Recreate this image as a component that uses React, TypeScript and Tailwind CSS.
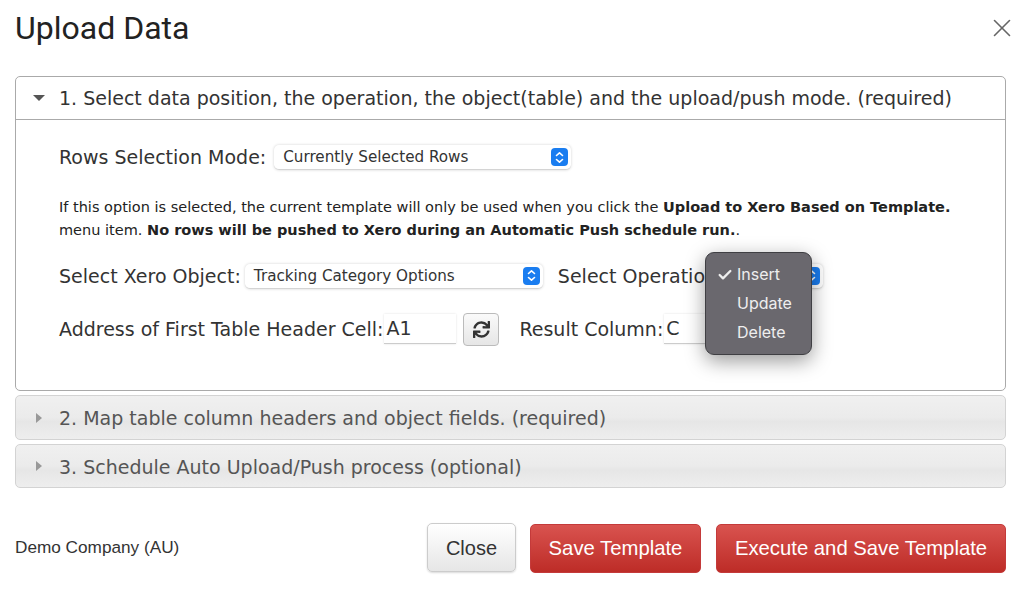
import React from 'react';
import { X, Check } from 'lucide-react';
import { FaSync } from 'react-icons/fa';

const verdana = "font-['DejaVu_Sans',sans-serif]";

function Stepper() {
  return (
    <span className="flex h-[18px] w-[17px] shrink-0 items-center justify-center rounded-[4px] bg-[#1a7df0]">
      <svg width="9" height="13" viewBox="0 0 9 13" fill="none" stroke="white" strokeWidth="1.6" strokeLinecap="round" strokeLinejoin="round">
        <path d="M1.5 4.5 4.5 1.8 7.5 4.5" />
        <path d="M1.5 8.5 4.5 11.2 7.5 8.5" />
      </svg>
    </span>
  );
}

function MacSelect({ label, className }: { label: string; className: string }) {
  return (
    <div className={`flex h-[25px] items-center justify-between rounded-[5px] border-b border-[#d4d4d4] bg-white pl-[9px] pr-[3px] text-[15.2px] text-[#333] shadow-[0_0_3px_rgba(0,0,0,0.18)] ${className}`}>
      <span className="pt-[1px]">{label}</span>
      <Stepper />
    </div>
  );
}

function CollapsedRow({ title, className }: { title: string; className: string }) {
  return (
    <div className={`flex items-center rounded-[5px] border border-[#d3d3d3] bg-[linear-gradient(#f0f0f0,#ebebeb_50%,#e6e6e6_60%,#eeeeee)] pl-[20px] text-[#555] ${className}`}>
      <span className="mr-[17px] h-0 w-0 border-y-[5px] border-l-[6px] border-y-transparent border-l-[#999]" />
      <span className="pt-[2px]">{title}</span>
    </div>
  );
}

export default function App() {
  return (
    <div className={`h-[595px] w-[1022px] overflow-hidden bg-white pl-[15px] pr-[16px] text-[19px] text-[#333] ${verdana}`}>
      <div className="flex h-[76px] items-start justify-between">
        <h1 className="mt-[9px] font-['Roboto',sans-serif] text-[32px] leading-[38px] text-[#222]">Upload Data</h1>
        <X className="mr-[-11px] mt-[13px] text-[#666]" size={30} strokeWidth={1.3} />
      </div>

      <div className="h-[315px] rounded-[5px] border border-[#aaa]">
        <div className="flex h-[43px] items-center border-b border-[#aaa] pl-[17px]">
          <span className="mr-[14px] h-0 w-0 border-x-[6px] border-t-[6px] border-x-transparent border-t-[#555]" />
          <span className="whitespace-nowrap">1. Select data position, the operation, the object(table) and the upload/push mode. (required)</span>
        </div>

        <div className="relative px-[43px]">
          <div className="flex items-center pt-[25px]">
            <span className="mr-[8px] leading-[25px]">Rows Selection Mode:</span>
            <MacSelect label="Currently Selected Rows" className="w-[297px]" />
          </div>

          <p className="mt-[26px] whitespace-nowrap text-[14.5px] leading-[23px] text-[#222]">
            If this option is selected, the current template will only be used when you click the <b>Upload to Xero Based on Template.</b>
            <br />
            menu item. <b>No rows will be pushed to Xero during an Automatic Push schedule run.</b>.
          </p>

          <div className="mt-[20px] flex items-center">
            <span className="mr-[4px]">Select Xero Object:</span>
            <MacSelect label="Tracking Category Options" className="w-[298px]" />
            <span className="ml-[15px] mr-[2px] whitespace-nowrap">Select Operation:</span>
            <MacSelect label="" className="w-[98px]" />
          </div>

          <div className="mt-[22px] flex items-center">
            <span className="mr-[1px] whitespace-nowrap">Address of First Table Header Cell:</span>
            <div className="flex h-[30px] w-[72px] items-center border-b border-[#ccc] pl-[2px] shadow-[0_0_2px_rgba(0,0,0,0.12)]">A1</div>
            <button className="ml-[7px] flex h-[33px] w-[36px] items-center justify-center rounded-[4px] border border-[#bbb] bg-[linear-gradient(#fafafa,#e6e6e6)] text-[#333]">
              <FaSync size={17} />
            </button>
            <span className="ml-[20px] mr-[1px] whitespace-nowrap">Result Column:</span>
            <div className="flex h-[30px] w-[60px] items-center border-b border-[#ccc] pl-[2px] shadow-[0_0_2px_rgba(0,0,0,0.12)]">C</div>
          </div>

          {/* native select popup sits on top of the operation select */}
          <ul className="absolute left-[689px] top-[132px] h-[103px] w-[107px] rounded-[9px] border border-[#3f3f43] bg-[#6a686e] py-[7px] font-['Inter',sans-serif] text-[16px] leading-[29px] text-[#eeeeee] shadow-[0_6px_20px_rgba(0,0,0,0.4)]">
            <li className="relative pl-[31px]">
              <Check className="absolute left-[11px] top-[7px]" size={16} strokeWidth={3.5} />
              Insert
            </li>
            <li className="pl-[31px]">Update</li>
            <li className="pl-[31px]">Delete</li>
          </ul>
        </div>
      </div>

      <div className="mt-[4px] flex flex-col gap-[4px]">
        <CollapsedRow title="2. Map table column headers and object fields. (required)" className="h-[45px]" />
        <CollapsedRow title="3. Schedule Auto Upload/Push process (optional)" className="h-[44px]" />
      </div>

      <div className="mt-[35px] flex items-start font-['Liberation_Sans',sans-serif]">
        <span className="mr-auto self-center text-[17.2px] text-[#333]">Demo Company (AU)</span>
        <button className="h-[49px] w-[89px] rounded-[5px] border border-[#ccc] bg-[linear-gradient(#ffffff,#e6e6e6)] text-[20px] text-[#333] shadow-[0_1px_2px_rgba(0,0,0,0.15)]">Close</button>
        <button className="ml-[14px] mt-[1px] h-[49px] w-[171px] rounded-[5px] border border-[#c43a3a] bg-[linear-gradient(#d9534f,#bd2c27)] text-[20.3px] text-white">Save Template</button>
        <button className="ml-[15px] mt-[1px] h-[49px] w-[290px] rounded-[5px] border border-[#c43a3a] bg-[linear-gradient(#d9534f,#bd2c27)] text-[20.3px] text-white">Execute and Save Template</button>
      </div>
    </div>
  );
}
